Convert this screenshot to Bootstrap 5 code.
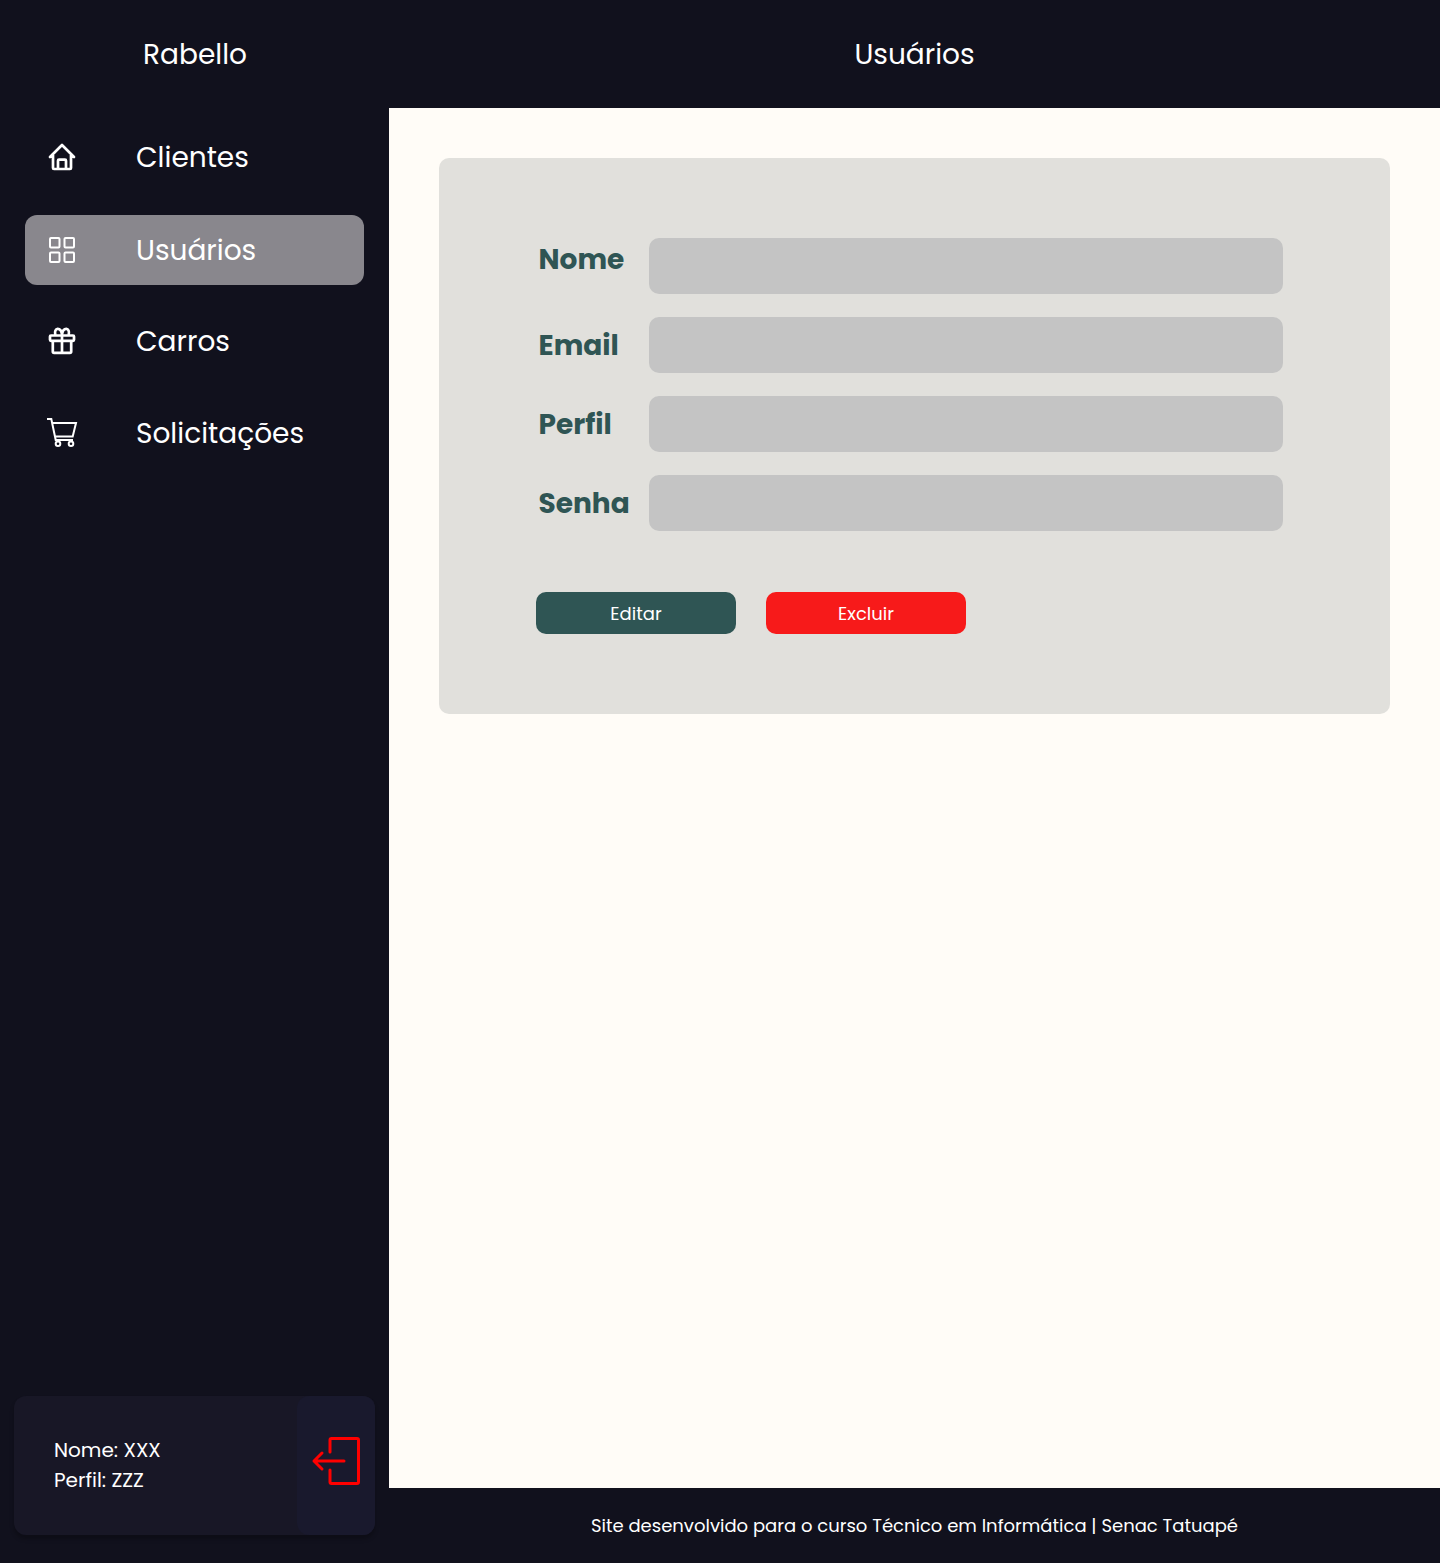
<!DOCTYPE html>
<html lang="pt-BR">
<head>
<meta charset="utf-8">
<meta name="viewport" content="width=device-width, initial-scale=1">
<title>Rabello - Usuários</title>
<link href="https://cdn.jsdelivr.net/npm/bootstrap@5.3.0/dist/css/bootstrap.min.css" rel="stylesheet">
<style>
body{font-family:Poppins,Inter,sans-serif;background:#fffcf7;color:#fff}
.shell{height:1563px}
.side{width:389px;background:#11111d}
.bar-top{height:108px;padding-top:2px;background:#11111d}
.brand-bar{padding-left:1px}
.title-text{font-size:28px;line-height:42px;font-weight:400}
.side-nav{padding:14px 25px 0}
.side-nav .nav-link{height:70px;margin-bottom:22px;border-radius:12px;color:#fff;padding:0 0 0 20px}
.side-nav .nav-link:first-child{margin-bottom:23px}
.side-nav .nav-link.active{margin-bottom:21px;background:#89878d}
.side-nav svg{width:34px;height:34px;margin-right:57px;flex:none}
.side-nav span{padding-top:2px}
.user-box{margin:0 14px 28px;height:139px;border-radius:12px;background:#181726;box-shadow:0 4px 4px rgba(0,0,0,.25);font-size:20px;line-height:30px}
.user-info{padding:0 0 2px 40px}
.exit-btn{width:78px;padding-bottom:10px;border-radius:12px;background:#19192d}
.panel{margin:50px 50px 0;height:556px;border-radius:10px;background:#e1e0dc;padding:80px 107px 0 97px}
.fields{gap:23px}
.fields label{width:113px;padding:2px 0 0 2.500px;color:#2f5554;font-weight:700;font-size:28px;line-height:42px}
.fields label.first-label{padding-bottom:12px;padding-top:0}
.fields .form-control{height:56px;border:0;border-radius:10px;background:#c4c4c4}
.actions{margin-top:61px;gap:30px}
.actions .btn{width:200px;height:42px;border:0;border-radius:10px;color:#fff;font-size:18px;padding:0}
.edit-btn,.edit-btn:hover{background:#2f5554}
.delete-btn,.delete-btn:hover{background:#f71a1a}
.foot{height:75px;background:#11111d;font-size:18px}
</style>
</head>
<body>
<div class="shell d-flex">
<aside class="side d-flex flex-column flex-shrink-0">
<div class="bar-top brand-bar d-flex align-items-center justify-content-center"><span class="title-text">Rabello</span></div>
<nav class="side-nav nav flex-column title-text">
<a class="nav-link d-flex align-items-center" href="#"><svg viewBox="0 0 34 34" fill="none" stroke="#fff" stroke-width="2.700" stroke-linejoin="round" stroke-linecap="round"><path d="M5 17 17 5l12 12M8 15v13q0 1 1 1h16q1 0 1-1V15M13 28v-7.300q0-1 1-1h6q1 0 1 1V28"/></svg><span>Clientes</span></a>
<a class="nav-link active d-flex align-items-center" href="#"><svg viewBox="0 0 34 34" fill="none" stroke="#fff" stroke-width="2"><rect x="5" y="5" width="9.500" height="9.500" rx="1"/><rect x="19.500" y="5" width="9.500" height="9.500" rx="1"/><rect x="5" y="19.500" width="9.500" height="9.500" rx="1"/><rect x="19.500" y="19.500" width="9.500" height="9.500" rx="1"/></svg><span>Usuários</span></a>
<a class="nav-link d-flex align-items-center" href="#"><svg viewBox="0 0 34 34" fill="none" stroke="#fff" stroke-width="2.700" stroke-linejoin="round"><rect x="5" y="11.500" width="24" height="5.300" rx="1"/><path d="M7.800 17v10.500q0 1.300 1.300 1.300h15.800q1.300 0 1.300-1.300V17M17 11v17.500M10.300 11C8.500 3 16 3 17 10.500 18 3 25.500 3 23.700 11"/></svg><span>Carros</span></a>
<a class="nav-link d-flex align-items-center" href="#"><svg viewBox="0 0 34 34" fill="none" stroke="#fff" stroke-width="2"><path d="M2 3h4.300l4.400 21H28M7 7h24l-3.300 13.500H10"/><circle cx="13" cy="27.700" r="2.300"/><circle cx="26" cy="27.700" r="2.300"/></svg><span>Solicitações</span></a>
</nav>
<div class="user-box d-flex mt-auto">
<div class="user-info flex-grow-1 d-flex flex-column justify-content-center align-items-start"><span>Nome: XXX</span><span>Perfil: ZZZ</span></div>
<a class="exit-btn d-flex align-items-center justify-content-center" href="#" aria-label="Sair"><svg width="50" height="50" viewBox="0 0 50 50" fill="none" stroke="#f00" stroke-width="3" stroke-linecap="round" stroke-linejoin="round"><path d="M19 16V4q0-1.500 1.500-1.500h25.500q1.500 0 1.500 1.500v42q0 1.500-1.500 1.500H20.500Q19 47.500 19 46V34M33 25H3M11 17l-8 8 8 8"/></svg></a>
</div>
</aside>
<div class="d-flex flex-column flex-grow-1">
<header class="bar-top d-flex align-items-center justify-content-center"><span class="title-text">Usuários</span></header>
<main class="flex-grow-1">
<form class="panel">
<div class="fields d-flex flex-column">
<div class="d-flex align-items-center"><label class="first-label flex-shrink-0" for="nome">Nome</label><input id="nome" class="form-control"></div>
<div class="d-flex align-items-center"><label class="flex-shrink-0" for="email">Email</label><input id="email" class="form-control"></div>
<div class="d-flex align-items-center"><label class="flex-shrink-0" for="perfil">Perfil</label><input id="perfil" class="form-control"></div>
<div class="d-flex align-items-center"><label class="flex-shrink-0" for="senha">Senha</label><input id="senha" type="password" class="form-control"></div>
</div>
<div class="actions d-flex"><button type="button" class="btn edit-btn">Editar</button><button type="button" class="btn delete-btn">Excluir</button></div>
</form>
</main>
<footer class="foot d-flex align-items-center justify-content-center">Site desenvolvido para o curso Técnico em Informática | Senac Tatuapé</footer>
</div>
</div>
<script src="https://cdn.jsdelivr.net/npm/bootstrap@5.3.0/dist/js/bootstrap.bundle.min.js"></script>
</body>
</html>
